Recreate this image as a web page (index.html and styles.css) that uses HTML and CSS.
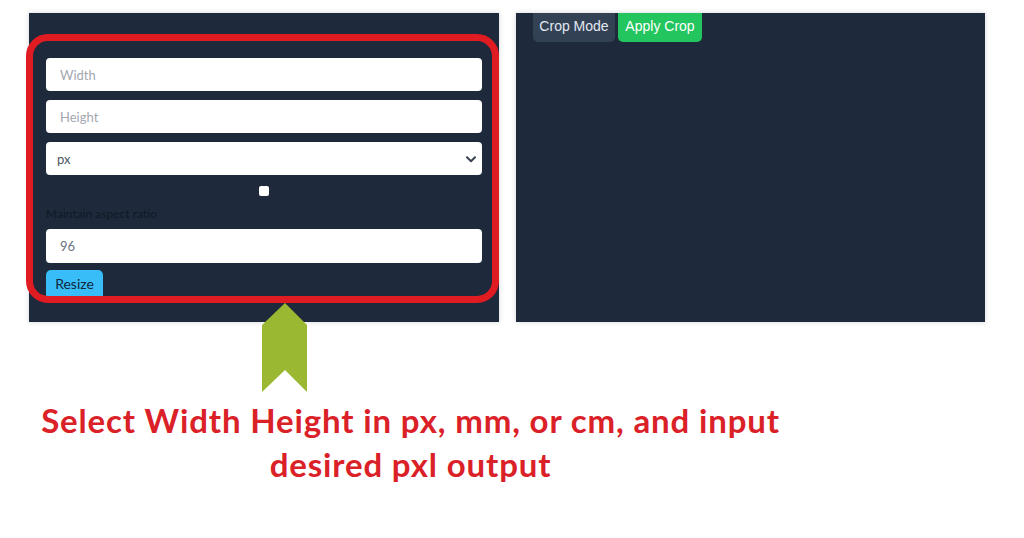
FILE: index.html
```html
<!DOCTYPE html>
<html>
<head>
<meta charset="utf-8">
<link rel="stylesheet" href="styles.css">
</head>
<body>
<div class="panels">
  <div class="panel panel-left">
    <input class="field" type="text" placeholder="Width">
    <input class="field field-gap" type="text" placeholder="Height">
    <div class="select-wrap field-gap">
      <select class="field select"><option>px</option><option>mm</option><option>cm</option></select>
      <svg class="chev" width="10" height="7" viewBox="0 0 10 7"><path d="M1 1.2 L5 5.2 L9 1.2" fill="none" stroke="#3b4252" stroke-width="2" stroke-linecap="round" stroke-linejoin="round"/></svg>
    </div>
    <div class="check-row"><input class="check" type="checkbox"></div>
    <label class="aspect">Maintain aspect ratio</label>
    <input class="field field-num" type="text" value="96">
    <div class="btn-row"><button class="resize">Resize</button></div>
    <div class="highlight"></div>
  </div>
  <div class="panel panel-right">
    <div class="crop-bar">
      <button class="crop-btn crop-mode">Crop Mode</button>
      <button class="crop-btn crop-apply">Apply Crop</button>
    </div>
  </div>
</div>
<div class="note">
  <svg class="arrow" width="46" height="90" viewBox="0 0 46 90"><polygon points="23,0 45,22 45,89 23,67 0,89 0,22" fill="#9bb832"/></svg>
  <p class="caption">Select Width Height in px, mm, or cm, and input<br>desired pxl output</p>
</div>
</body>
</html>
```
FILE: styles.css
```css
* { box-sizing: border-box; }
html, body { margin: 0; padding: 0; background: #ffffff; }
body { width: 1024px; height: 538px; overflow: hidden; font-family: Lato, "Open Sans", sans-serif; }

.panels {
  display: flex;
  gap: 17px;
  padding: 13px 0 0 29px;
}
.panel {
  background: #1e293b;
  height: 309px;
  box-shadow: 0 0 5px rgba(60, 70, 90, 0.22);
}
.panel-left {
  position: relative;
  width: 470px;
  padding: 45px 17px 0 17px;
  display: flex;
  flex-direction: column;
}
.panel-right { width: 469px; }

.field {
  display: block;
  width: 100%;
  height: 33px;
  border: none;
  border-radius: 4px;
  background: #ffffff;
  padding: 0 14px;
  font-family: Lato, "Open Sans", sans-serif;
  font-size: 13px;
  color: #6b7280;
  outline: none;
}
.field::placeholder { color: #a3a7b0; }
.field-gap { margin-top: 9px; }
.select-wrap { position: relative; }
.select {
  appearance: none;
  -webkit-appearance: none;
  padding-left: 11px;
  color: #4b5563;
}
.chev { position: absolute; right: 6px; top: 14px; }

.check-row {
  display: flex;
  justify-content: center;
  margin-top: 11px;
  height: 10px;
}
.check {
  appearance: none;
  -webkit-appearance: none;
  width: 10px;
  height: 10px;
  margin: 0;
  background: #ffffff;
  border-radius: 2px;
}
.aspect {
  margin-top: 11px;
  font-size: 12px;
  line-height: 14px;
  color: #111826;
}
.field-num { margin-top: 8px; height: 34px; }
.btn-row { margin-top: 7px; }
.resize {
  width: 57px;
  height: 28px;
  border: none;
  border-radius: 5px 5px 0 0;
  background: #38bdf8;
  color: #10263d;
  font-family: Lato, "Open Sans", sans-serif;
  font-size: 14px;
  padding: 0;
  line-height: 26px;
}
.highlight {
  position: absolute;
  left: -3px;
  top: 21px;
  width: 473px;
  height: 269px;
  border: 7px solid #e01b22;
  border-radius: 22px;
  pointer-events: none;
}

.crop-bar {
  display: flex;
  gap: 3px;
  padding-left: 17px;
}
.crop-btn {
  height: 29px;
  border: none;
  border-radius: 0 0 5px 5px;
  font-family: "Liberation Sans", Arial, sans-serif;
  font-size: 14px;
  padding: 0 0 3px 0;
  white-space: nowrap;
  text-align: center;
}
.crop-mode { width: 82px; background: #334155; color: #e2e8f0; }
.crop-apply { width: 84px; background: #22c55e; color: #ffffff; }

.note {
  width: 821px;
  display: flex;
  flex-direction: column;
  align-items: flex-start;
}
.arrow {
  display: block;
  margin: -19px 0 0 262px;
  position: relative;
}
.caption {
  margin: 5px 0 0 0;
  width: 100%;
  text-align: center;
  font-family: Lato, sans-serif;
  font-weight: 700;
  font-size: 33px;
  letter-spacing: 0.85px;
  line-height: 44px;
  color: #db2128;
}
```
